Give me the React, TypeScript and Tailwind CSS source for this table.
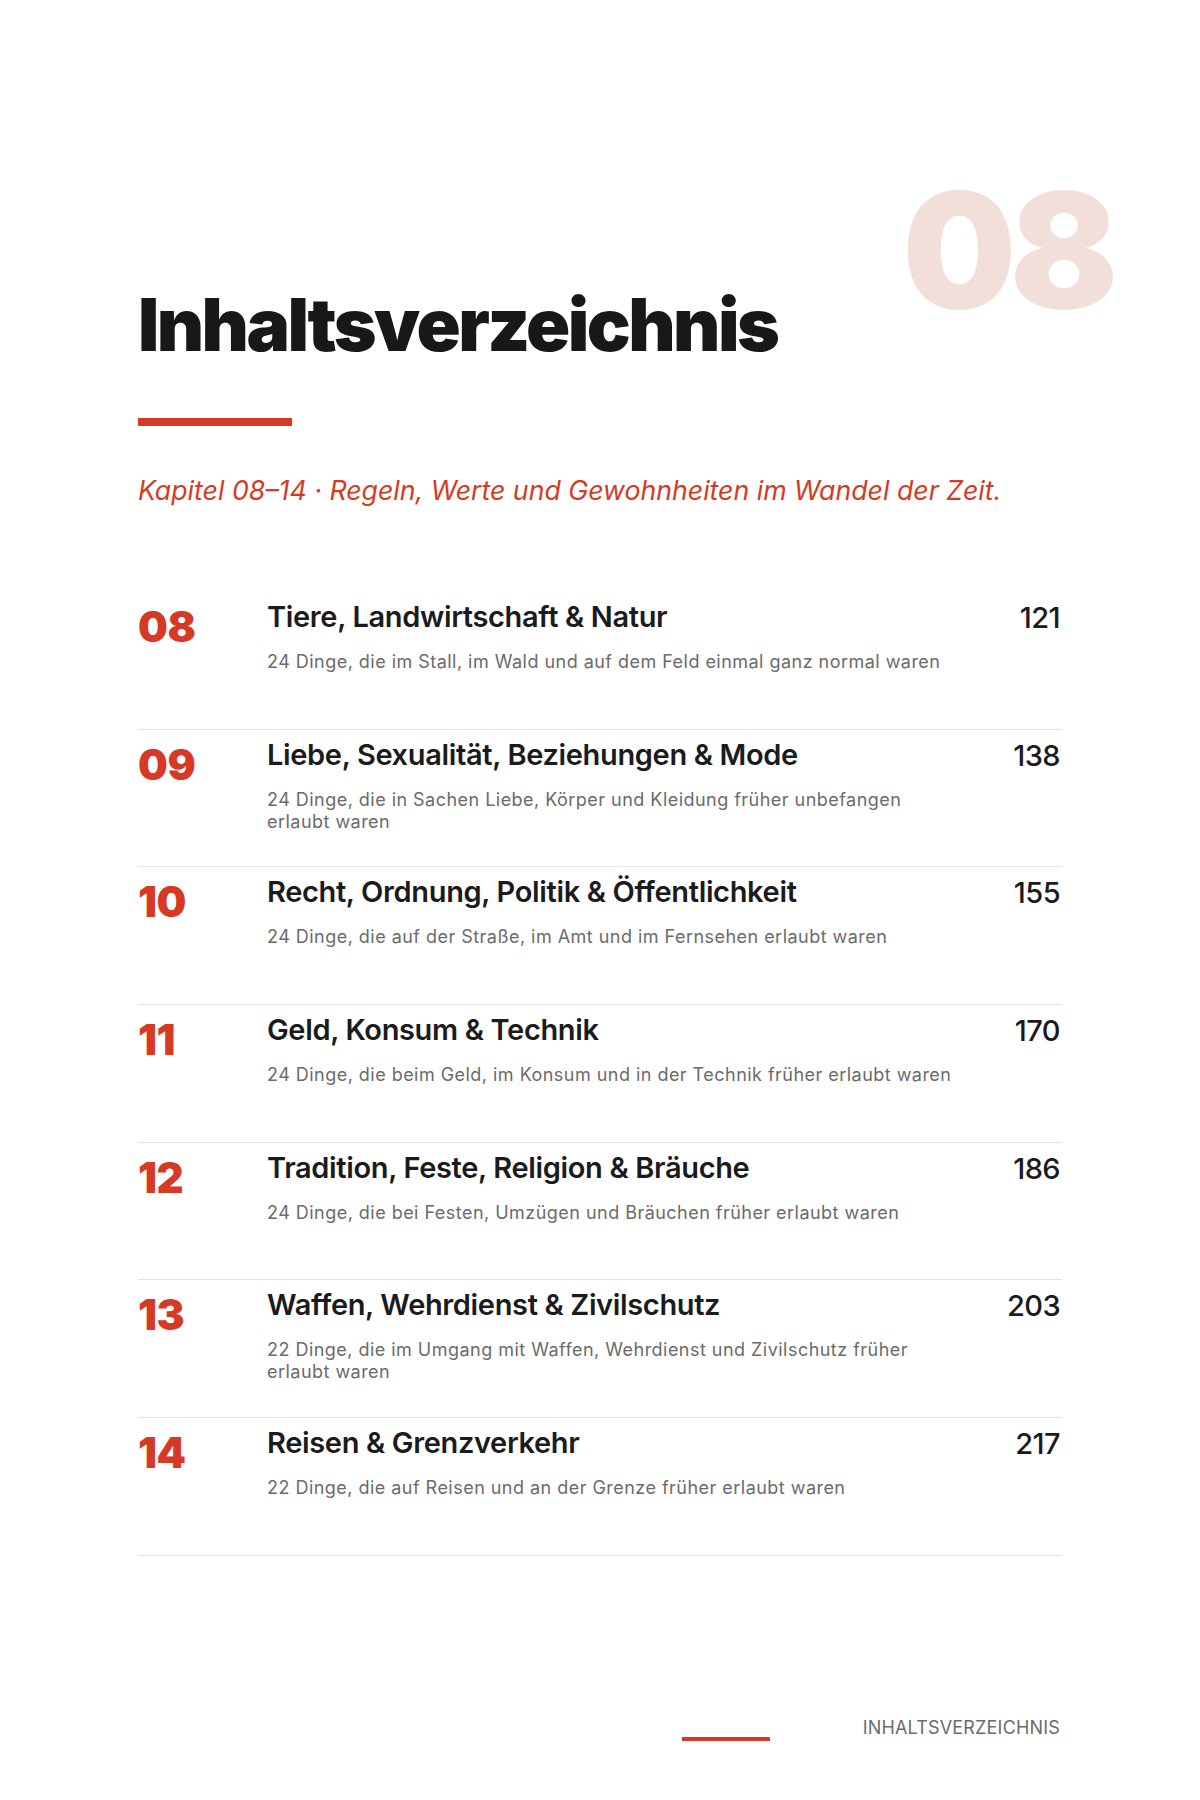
const chapters = [
  {
    num: '08',
    title: 'Tiere, Landwirtschaft & Natur',
    desc: '24 Dinge, die im Stall, im Wald und auf dem Feld einmal ganz normal waren',
    page: 121,
  },
  {
    num: '09',
    title: 'Liebe, Sexualität, Beziehungen & Mode',
    desc: '24 Dinge, die in Sachen Liebe, Körper und Kleidung früher unbefangen erlaubt waren',
    page: 138,
  },
  {
    num: '10',
    title: 'Recht, Ordnung, Politik & Öffentlichkeit',
    desc: '24 Dinge, die auf der Straße, im Amt und im Fernsehen erlaubt waren',
    page: 155,
  },
  {
    num: '11',
    title: 'Geld, Konsum & Technik',
    desc: '24 Dinge, die beim Geld, im Konsum und in der Technik früher erlaubt waren',
    page: 170,
  },
  {
    num: '12',
    title: 'Tradition, Feste, Religion & Bräuche',
    desc: '24 Dinge, die bei Festen, Umzügen und Bräuchen früher erlaubt waren',
    page: 186,
  },
  {
    num: '13',
    title: 'Waffen, Wehrdienst & Zivilschutz',
    desc: '22 Dinge, die im Umgang mit Waffen, Wehrdienst und Zivilschutz früher erlaubt waren',
    page: 203,
  },
  {
    num: '14',
    title: 'Reisen & Grenzverkehr',
    desc: '22 Dinge, die auf Reisen und an der Grenze früher erlaubt waren',
    page: 217,
  },
];

type Chapter = (typeof chapters)[number];

function ChapterRow({ chapter }: { chapter: Chapter }) {
  return (
    <div className="grid h-[137.7px] grid-cols-[129px_1fr_auto] border-b border-[#e4e4e4]">
      <div className="pt-[14px] text-[42px] font-black leading-none tracking-[-0.01em] text-[#d63a24]">
        {chapter.num}
      </div>
      <div className="pt-[7px]">
        <h2 className="text-[29px] font-semibold leading-[36px] tracking-[-0.012em] text-[#1b1b1d]">
          {chapter.title}
        </h2>
        <p className="mt-[16px] max-w-[692px] text-[18px] leading-[22px] tracking-[0.026em] text-[#6b6b6b]">
          {chapter.desc}
        </p>
      </div>
      <div className="pr-[2px] pt-[8px] text-right text-[29px] font-medium leading-[36px] tracking-[-0.02em] text-[#1b1b1d]">
        {chapter.page}
      </div>
    </div>
  );
}

export default function App() {
  return (
    <div className="min-h-[1800px] overflow-hidden bg-white font-[Inter,'Liberation_Sans',sans-serif]">
      <div className="relative mx-auto w-[924px] pt-[288px]">
        {/* Kapitelnummer im Hintergrund */}
        <div className="pointer-events-none absolute right-[-50px] top-[170px] select-none text-[160px] font-black leading-none tracking-[-0.04em] text-[#f2dfd9]">
          08
        </div>

        <h1 className="relative text-[73px] font-black leading-none tracking-[-0.035em] text-[#18181b]">
          Inhaltsverzeichnis
        </h1>
        <div className="mt-[57px] h-[8px] w-[154px] bg-[#d63a24]" />
        <p className="mt-[48px] text-[26.7px] italic leading-[32px] text-[#d63a24]">
          Kapitel 08–14 · Regeln, Werte und Gewohnheiten im Wandel der Zeit.
        </p>

        <div className="mt-[86px]">
          {chapters.map((c) => (
            <ChapterRow key={c.num} chapter={c} />
          ))}
        </div>

        <div className="mt-[161px] flex items-start justify-end gap-[93px] pr-[2px]">
          <div className="mt-[20px] h-[4px] w-[88px] bg-[#d63a24]" />
          <span className="text-[18px] uppercase leading-[22px] tracking-[0.01em] text-[#6b6b6b]">
            Inhaltsverzeichnis
          </span>
        </div>
      </div>
    </div>
  );
}
